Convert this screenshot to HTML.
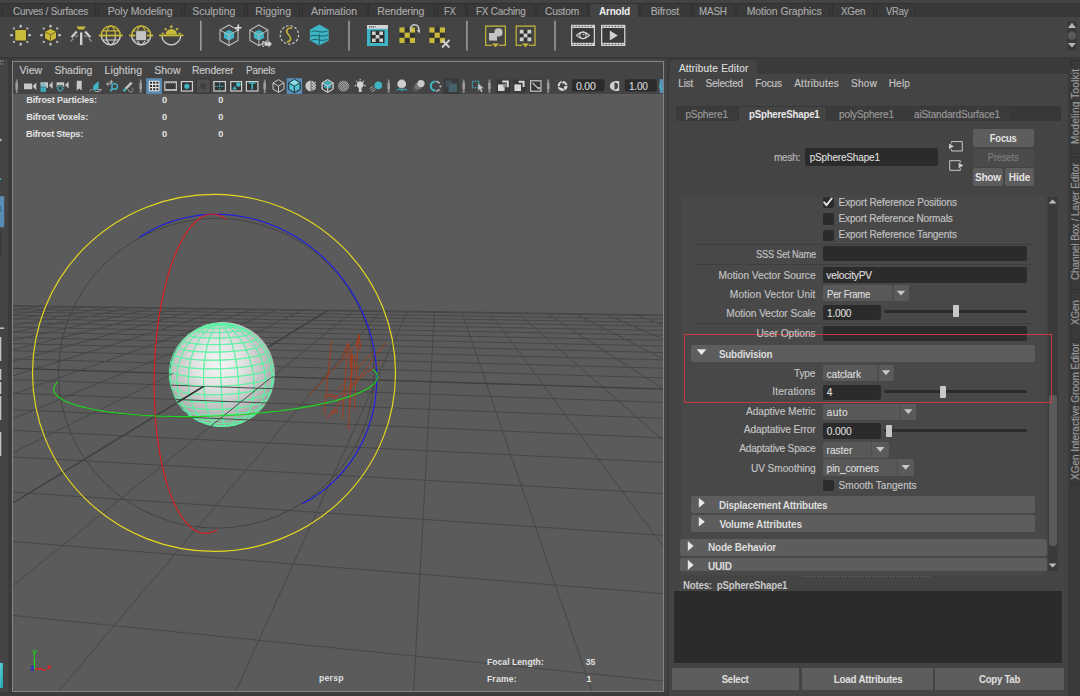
<!DOCTYPE html>
<html><head><meta charset="utf-8"><style>
html,body{margin:0;padding:0;width:1080px;height:696px;overflow:hidden;background:#444;}
body{position:relative;font-family:"Liberation Sans",sans-serif;}
div{position:absolute;}
.t{white-space:pre;-webkit-text-stroke:0.15px currentColor;}
svg{position:absolute;left:0;top:0;}
</style></head><body>
<div style="left:0px;top:0px;width:1080px;height:3px;background:#434343;"></div><div style="left:0px;top:3px;width:1080px;height:14px;background:#383838;"></div><div style="left:0px;top:17px;width:1080px;height:40px;background:#444444;"></div><div style="left:0px;top:57px;width:1080px;height:2px;background:#393939;"></div><div style="left:2px;top:3px;width:94px;height:14px;background:#393939;border:1px solid #303030;border-bottom:none;box-sizing:border-box;border-radius:2px 2px 0 0"></div><div style="left:98px;top:3px;width:84px;height:14px;background:#393939;border:1px solid #303030;border-bottom:none;box-sizing:border-box;border-radius:2px 2px 0 0"></div><div style="left:184px;top:3px;width:61px;height:14px;background:#393939;border:1px solid #303030;border-bottom:none;box-sizing:border-box;border-radius:2px 2px 0 0"></div><div style="left:247px;top:3px;width:53px;height:14px;background:#393939;border:1px solid #303030;border-bottom:none;box-sizing:border-box;border-radius:2px 2px 0 0"></div><div style="left:302px;top:3px;width:65px;height:14px;background:#393939;border:1px solid #303030;border-bottom:none;box-sizing:border-box;border-radius:2px 2px 0 0"></div><div style="left:368px;top:3px;width:67px;height:14px;background:#393939;border:1px solid #303030;border-bottom:none;box-sizing:border-box;border-radius:2px 2px 0 0"></div><div style="left:437px;top:3px;width:29px;height:14px;background:#393939;border:1px solid #303030;border-bottom:none;box-sizing:border-box;border-radius:2px 2px 0 0"></div><div style="left:467px;top:3px;width:68px;height:14px;background:#393939;border:1px solid #303030;border-bottom:none;box-sizing:border-box;border-radius:2px 2px 0 0"></div><div style="left:537px;top:3px;width:51px;height:14px;background:#393939;border:1px solid #303030;border-bottom:none;box-sizing:border-box;border-radius:2px 2px 0 0"></div><div style="left:589px;top:3px;width:50px;height:14px;background:#444444;border:1px solid #303030;border-bottom:none;box-sizing:border-box;border-radius:2px 2px 0 0"></div><div style="left:641px;top:3px;width:50px;height:14px;background:#393939;border:1px solid #303030;border-bottom:none;box-sizing:border-box;border-radius:2px 2px 0 0"></div><div style="left:692px;top:3px;width:43px;height:14px;background:#393939;border:1px solid #303030;border-bottom:none;box-sizing:border-box;border-radius:2px 2px 0 0"></div><div style="left:737px;top:3px;width:93px;height:14px;background:#393939;border:1px solid #303030;border-bottom:none;box-sizing:border-box;border-radius:2px 2px 0 0"></div><div style="left:832px;top:3px;width:42px;height:14px;background:#393939;border:1px solid #303030;border-bottom:none;box-sizing:border-box;border-radius:2px 2px 0 0"></div><div style="left:876px;top:3px;width:39px;height:14px;background:#393939;border:1px solid #303030;border-bottom:none;box-sizing:border-box;border-radius:2px 2px 0 0"></div><div style="left:0px;top:59px;width:8px;height:637px;background:#444444;"></div><div style="left:8px;top:59px;width:4px;height:637px;background:#3b3b3b;"></div><div style="left:12px;top:61px;width:652px;height:631px;background:#858585;"></div><div style="left:13px;top:62px;width:650px;height:32px;background:#444444;"></div><div style="left:13px;top:94px;width:650px;height:597px;background:#5b5b5b;"></div><div style="left:664px;top:59px;width:5px;height:637px;background:#434343;"></div><div style="left:667px;top:59px;width:2px;height:637px;background:#3a3a3a;"></div><div style="left:0px;top:692px;width:669px;height:4px;background:#3b3b3b;"></div><div style="left:669px;top:59px;width:411px;height:637px;background:#444444;"></div><div style="left:669px;top:59px;width:399px;height:15px;background:#3b3b3b;"></div><div style="left:670px;top:60px;width:87px;height:14px;background:#444444;border-radius:3px 3px 0 0"></div><div style="left:1068px;top:59px;width:12px;height:637px;background:#3a3a3a;"></div><div style="left:675.6px;top:105.6px;width:385px;height:15.5px;background:#383838;"></div><div style="left:676px;top:107px;width:61px;height:14px;background:#3b3b3b;border-radius:2px 2px 0 0"></div><div style="left:739px;top:107px;width:87px;height:14px;background:#444444;border-radius:2px 2px 0 0"></div><div style="left:828px;top:107px;width:76px;height:14px;background:#3b3b3b;border-radius:2px 2px 0 0"></div><div style="left:905px;top:107px;width:105px;height:14px;background:#3b3b3b;border-radius:2px 2px 0 0"></div><div style="left:805px;top:147.5px;width:133px;height:18.5px;background:#2b2b2b;border-radius:2px"></div><div style="left:973px;top:129px;width:61px;height:18px;background:#5d5d5d;border-radius:2px"></div><div style="left:973px;top:148.5px;width:61px;height:18px;background:#4b4b4b;border-radius:2px"></div><div style="left:973px;top:168px;width:30px;height:17.5px;background:#5d5d5d;border-radius:2px"></div><div style="left:1005px;top:168px;width:29px;height:17.5px;background:#5d5d5d;border-radius:2px"></div><div style="left:681px;top:196px;width:364px;height:379px;background:#484848;"></div><div style="left:1048px;top:196.5px;width:10px;height:374.5px;background:#3a3a3a;"></div><div style="left:1049px;top:394.7px;width:8px;height:151px;background:#5a5a5a;border-radius:3px"></div><div style="left:822.5px;top:196.5px;width:11.5px;height:11.5px;background:#2b2b2b;border-radius:2px"></div><div style="left:822.5px;top:213px;width:11.5px;height:11.5px;background:#2b2b2b;border-radius:2px"></div><div style="left:822.5px;top:229.5px;width:11.5px;height:11.5px;background:#2b2b2b;border-radius:2px"></div><div style="left:694px;top:243.5px;width:338px;height:1px;background:#3f3f3f;"></div><div style="left:694px;top:264px;width:338px;height:1px;background:#3f3f3f;"></div><div style="left:694px;top:322.5px;width:338px;height:1px;background:#3f3f3f;"></div><div style="left:822.5px;top:246.4px;width:204.0px;height:15.099999999999994px;background:#2b2b2b;border-radius:2px"></div><div style="left:822.5px;top:267.4px;width:204.0px;height:15.200000000000045px;background:#2b2b2b;border-radius:2px"></div><div style="left:823px;top:285.1px;width:69px;height:16.19999999999999px;background:#585858;border-radius:2px 0 0 2px"></div><div style="left:892px;top:285.1px;width:1.5px;height:16.19999999999999px;background:#4e4e4e;"></div><div style="left:893.5px;top:285.1px;width:15.5px;height:16.19999999999999px;background:#5a5a5a;border-radius:0 2px 2px 0"></div><div style="left:823px;top:305px;width:57.700000000000045px;height:15px;background:#2b2b2b;border-radius:2px"></div><div style="left:884px;top:309.9px;width:143px;height:3px;background:#2b2b2b;border-radius:1.5px"></div><div style="left:952.8px;top:305.4px;width:6.5px;height:12px;background:#c8c8c8;border-radius:1px"></div><div style="left:822.5px;top:325.7px;width:204.0px;height:15.199999999999989px;background:#2b2b2b;border-radius:2px"></div><div style="left:691px;top:345.4px;width:344px;height:16.5px;background:#5d5d5d;border-radius:2px"></div><div style="left:823px;top:364.8px;width:54px;height:15.899999999999977px;background:#585858;border-radius:2px 0 0 2px"></div><div style="left:877px;top:364.8px;width:1.5px;height:15.899999999999977px;background:#4e4e4e;"></div><div style="left:878.5px;top:364.8px;width:15.5px;height:15.899999999999977px;background:#5a5a5a;border-radius:0 2px 2px 0"></div><div style="left:823px;top:384.5px;width:57.700000000000045px;height:15.199999999999989px;background:#2b2b2b;border-radius:2px"></div><div style="left:884px;top:390.0px;width:143px;height:3px;background:#2b2b2b;border-radius:1.5px"></div><div style="left:939.6px;top:385.5px;width:6.5px;height:12px;background:#c8c8c8;border-radius:1px"></div><div style="left:823px;top:403.5px;width:76.70000000000005px;height:16.19999999999999px;background:#585858;border-radius:2px 0 0 2px"></div><div style="left:899.7px;top:403.5px;width:1.5px;height:16.19999999999999px;background:#4e4e4e;"></div><div style="left:901.2px;top:403.5px;width:14.799999999999955px;height:16.19999999999999px;background:#5a5a5a;border-radius:0 2px 2px 0"></div><div style="left:823px;top:422.5px;width:57.700000000000045px;height:16.0px;background:#2b2b2b;border-radius:2px"></div><div style="left:884px;top:429.0px;width:143px;height:3px;background:#2b2b2b;border-radius:1.5px"></div><div style="left:885.6px;top:424.5px;width:6.5px;height:12px;background:#c8c8c8;border-radius:1px"></div><div style="left:823px;top:441.5px;width:47.5px;height:16.0px;background:#585858;border-radius:2px 0 0 2px"></div><div style="left:870.5px;top:441.5px;width:1.5px;height:16.0px;background:#4e4e4e;"></div><div style="left:872.0px;top:441.5px;width:17.0px;height:16.0px;background:#5a5a5a;border-radius:0 2px 2px 0"></div><div style="left:823px;top:458.8px;width:73.60000000000002px;height:17.099999999999966px;background:#585858;border-radius:2px 0 0 2px"></div><div style="left:896.6px;top:458.8px;width:1.5px;height:17.099999999999966px;background:#4e4e4e;"></div><div style="left:898.1px;top:458.8px;width:15.600000000000023px;height:17.099999999999966px;background:#5a5a5a;border-radius:0 2px 2px 0"></div><div style="left:822.5px;top:479.7px;width:11.5px;height:11.5px;background:#2b2b2b;border-radius:2px"></div><div style="left:691px;top:495.6px;width:344px;height:17px;background:#5d5d5d;border-radius:2px"></div><div style="left:691px;top:514.6px;width:344px;height:17px;background:#5d5d5d;border-radius:2px"></div><div style="left:679.5px;top:538.5px;width:367px;height:17px;background:#5d5d5d;border-radius:2px"></div><div style="left:679.5px;top:557.5px;width:367px;height:13.5px;background:#5d5d5d;border-radius:2px 2px 0 0"></div><div style="left:674.4px;top:590.9px;width:387.4px;height:72.6px;background:#2b2b2b;"></div><div style="left:671.7px;top:667.5px;width:127.5px;height:22.2px;background:#5d5d5d;"></div><div style="left:802px;top:667.5px;width:131.39999999999998px;height:22.2px;background:#5d5d5d;"></div><div style="left:935.4px;top:667.5px;width:129.10000000000002px;height:22.2px;background:#5d5d5d;"></div><div style="left:684.4px;top:334px;width:368px;height:68.5px;background:transparent;border:1px solid #c8383c;box-sizing:border-box"></div><div style="left:1070.5px;top:60.2px;width:9.5px;height:93.8px;background:#3a3a3a;border:1px solid #323232;border-right:none;box-sizing:border-box;border-radius:2px 0 0 2px"></div><div style="left:1070.5px;top:156.7px;width:9.5px;height:133.3px;background:#3a3a3a;border:1px solid #323232;border-right:none;box-sizing:border-box;border-radius:2px 0 0 2px"></div><div style="left:1070.5px;top:292px;width:9.5px;height:47.60000000000002px;background:#3a3a3a;border:1px solid #323232;border-right:none;box-sizing:border-box;border-radius:2px 0 0 2px"></div><div style="left:1070.5px;top:341.3px;width:9.5px;height:144.2px;background:#3a3a3a;border:1px solid #323232;border-right:none;box-sizing:border-box;border-radius:2px 0 0 2px"></div>
<svg width="650" height="597" viewBox="0 0 650 597" style="left:13px;top:94px;"><path d="M-57.8,210.7L-3994.2,713.8M-36.6,211.0L-3914.1,732.0M-15.1,211.3L-3934.1,766.3M6.7,211.7L-3956.6,804.9M28.7,212.0L-3982.1,848.9M50.9,212.3L-4011.4,899.3M73.5,212.6L-3904.1,932.1M96.3,213.0L-3930.8,996.0M119.4,213.3L-3962.3,1071.4M142.9,213.6L-4000.0,1161.7M166.6,214.0L-3851.5,1223.1M190.6,214.3L-3883.2,1348.2M214.9,214.7L-3923.4,1506.7M239.6,215.0L-3712.8,1620.3M264.5,215.4L-3224.6,1656.5M289.8,215.7L-2524.8,1603.0M341.4,216.5L-1470.6,1675.7M367.7,216.9L-821.3,1620.7M394.4,217.2L-255.4,1657.1M421.4,217.6L345.6,1603.4M448.8,218.0L935.8,1639.0M476.6,218.4L1490.2,1586.3M504.8,218.8L2103.7,1621.2M533.4,219.2L2749.1,1657.8M562.3,219.7L3249.0,1603.7M591.7,220.1L3917.4,1639.6M621.5,220.5L3953.5,1434.1M651.7,220.9L3980.9,1278.1M682.4,221.4L3859.4,1115.4M713.5,221.8L3889.5,1024.0M745.1,222.3L3914.5,948.3M777.1,222.7L3935.5,884.5M-57.8,210.7L777.1,222.7M-63.1,211.4L781.9,223.7M-81.6,213.8L798.8,227.3M-101.6,216.3L817.4,231.2M-123.2,219.1L838.0,235.5M-146.7,222.1L860.9,240.3M-172.3,225.4L886.4,245.7M-200.3,228.9L915.2,251.7M-231.0,232.9L947.7,258.5M-264.9,237.2L984.9,266.3M-302.5,242.0L1027.7,275.3M-344.4,247.4L1077.7,285.7M-391.5,253.4L1136.7,298.1M-505.3,267.9L1293.8,331.0M-575.0,276.8L1401.6,353.6M-655.9,287.2L1540.0,382.6M-751.2,299.4L1724.1,421.2M-864.8,313.9L1980.9,475.0M-1002.7,331.5L2364.4,555.3M-1173.6,353.3L2998.7,688.2M-1391.0,381.1L3957.9,920.9M-1676.9,417.7L3976.4,1182.2M-2069.5,467.8L3739.9,1650.3M-2642.5,541.1L130.9,1666.3M-3557.2,658.0L-3506.9,1682.3" stroke="#474747" stroke-width="1" fill="none"/><path d="M315.4,216.1L-2011.1,1638.4M-444.7,260.2L1207.5,312.9" stroke="#3e3e3e" stroke-width="1.35" fill="none"/><defs><radialGradient id="sg" cx="0.46" cy="0.40" r="0.66"><stop offset="0" stop-color="#f4f4f4"/><stop offset="0.35" stop-color="#e2e2e2"/><stop offset="0.7" stop-color="#bcbcbc"/><stop offset="1" stop-color="#8e8e8e"/></radialGradient><clipPath id="below"><path d="M259.2,282.7L259.0,282.8L258.7,283.0L258.5,283.2L258.2,283.4L257.9,283.6L257.6,283.8L257.2,284.0L256.9,284.1L256.5,284.3L256.1,284.5L255.7,284.7L255.3,284.9L254.9,285.1L254.4,285.2L254.0,285.4L253.5,285.6L253.0,285.8L252.5,285.9L252.0,286.1L251.4,286.3L250.9,286.5L250.3,286.6L249.7,286.8L249.1,287.0L248.5,287.2L247.9,287.3L247.3,287.5L246.6,287.6L246.0,287.8L245.3,288.0L244.6,288.1L243.9,288.3L243.2,288.4L242.5,288.6L241.7,288.7L241.0,288.9L240.2,289.0L239.4,289.2L238.6,289.3L237.8,289.5L237.0,289.6L236.2,289.7L235.4,289.9L234.5,290.0L233.7,290.1L232.8,290.2L232.0,290.4L231.1,290.5L230.2,290.6L229.3,290.7L228.4,290.8L227.5,290.9L226.6,291.0L225.6,291.1L224.7,291.2L223.8,291.3L222.8,291.4L221.9,291.5L220.9,291.6L220.0,291.6L219.0,291.7L218.0,291.8L217.1,291.9L216.1,291.9L215.1,292.0L214.1,292.0L213.1,292.1L212.2,292.1L211.2,292.2L210.2,292.2L209.2,292.3L208.2,292.3L207.2,292.4L206.2,292.4L205.2,292.4L204.3,292.4L203.3,292.4L202.3,292.5L201.3,292.5L200.3,292.5L199.3,292.5L198.4,292.5L197.4,292.5L196.4,292.5L195.5,292.5L194.5,292.4L193.6,292.4L192.6,292.4L191.7,292.4L190.7,292.3L189.8,292.3L188.9,292.3L188.0,292.2L187.1,292.2L186.2,292.1L185.3,292.1L184.4,292.0L183.5,292.0L182.7,291.9L181.8,291.8L181.0,291.8L180.1,291.7L179.3,291.6L178.5,291.5L177.7,291.4L176.9,291.4L176.1,291.3L175.4,291.2L174.6,291.1L173.9,291.0L173.1,290.9L172.4,290.8L171.7,290.7L171.0,290.5L170.4,290.4L169.7,290.3L169.0,290.2L168.4,290.1L167.8,289.9L167.2,289.8L166.6,289.7L166.0,289.5L165.5,289.4L164.9,289.3L164.4,289.1L163.9,289.0L163.4,288.8L162.9,288.7L162.4,288.5L162.0,288.4L161.5,288.2L161.1,288.1L160.7,287.9L160.3,287.8L160.0,287.6L159.6,287.4L159.3,287.3L159.0,287.1L158.7,286.9L158.4,286.8L158.1,286.6L157.8,286.4L157.6,286.2L157.4,286.1L157.2,285.9L157.0,285.7L156.8,285.5L156.7,285.4L156.6,285.2L156.4,285.0L156.3,284.8L156.3,284.6L156.2,284.5L156.1,284.3L156.1,284.1L156.1,283.9L156.1,283.7L156.1,283.5L156.1,283.3L156.2,283.2L156.3,283.0L156.3,282.8L156.4,282.6L156.6,282.4L156.7,282.2L156.8,282.0L157.0,281.9L157.2,281.7L157.4,281.5L157.6,281.3L157.8,281.1L158.0,280.9L158.3,280.8L158.5,280.6L158.8,280.4L159.1,280.2L159.4,280.0L159.8,279.9L160.1,279.7L160.4,279.5L129.6,282.3L129.6,360.3L289.6,360.3L289.6,282.3Z"/></clipPath><clipPath id="disc"><circle cx="209.6" cy="280.3" r="53.0"/></clipPath></defs><circle cx="209.6" cy="280.3" r="52.4" fill="url(#sg)"/><path d="M239.9,322.5L235.8,324.9L240.7,320.6L245.6,317.7ZM245.6,317.7L240.7,320.6L245.0,315.2L250.5,312.0ZM250.5,312.0L245.0,315.2L248.4,308.8L254.4,305.4ZM254.4,305.4L248.4,308.8L250.8,301.7L257.2,298.3ZM257.2,298.3L250.8,301.7L252.2,294.0L258.8,290.6ZM258.8,290.6L252.2,294.0L252.5,285.9L259.2,282.7ZM259.2,282.7L252.5,285.9L251.7,277.7L258.4,274.6ZM258.4,274.6L251.7,277.7L249.8,269.5L256.3,266.7ZM256.3,266.7L249.8,269.5L246.9,261.5L253.0,259.1ZM253.0,259.1L246.9,261.5L243.0,254.1L248.6,252.0ZM248.6,252.0L243.0,254.1L238.2,247.4L243.2,245.7ZM243.2,245.7L238.2,247.4L232.7,241.6L237.0,240.2ZM237.0,240.2L232.7,241.6L226.6,236.8L230.0,235.8ZM230.0,235.8L226.6,236.8L220.2,233.1L222.5,232.5ZM222.5,232.5L220.2,233.1L213.5,230.7L214.7,230.4ZM214.7,230.4L213.5,230.7L206.8,229.6L206.8,229.6ZM224.2,330.2L220.7,331.3L225.0,329.8L230.2,328.1ZM230.2,328.1L225.0,329.8L229.0,327.0L235.8,324.9ZM235.8,324.9L229.0,327.0L232.6,323.1L240.7,320.6ZM240.7,320.6L232.6,323.1L235.7,318.0L245.0,315.2ZM245.0,315.2L235.7,318.0L238.2,311.8L248.4,308.8ZM248.4,308.8L238.2,311.8L239.9,304.8L250.8,301.7ZM250.8,301.7L239.9,304.8L240.8,297.1L252.2,294.0ZM252.2,294.0L240.8,297.1L241.0,288.9L252.5,285.9ZM252.5,285.9L241.0,288.9L240.3,280.4L251.7,277.7ZM251.7,277.7L240.3,280.4L238.7,271.9L249.8,269.5ZM249.8,269.5L238.7,271.9L236.4,263.7L246.9,261.5ZM246.9,261.5L236.4,263.7L233.5,255.9L243.0,254.1ZM243.0,254.1L233.5,255.9L229.8,248.9L238.2,247.4ZM238.2,247.4L229.8,248.9L225.7,242.7L232.7,241.6ZM232.7,241.6L225.7,242.7L221.2,237.6L226.6,236.8ZM226.6,236.8L221.2,237.6L216.5,233.7L220.2,233.1ZM220.2,233.1L216.5,233.7L211.7,231.0L213.5,230.7ZM213.5,230.7L211.7,231.0L206.8,229.6L206.8,229.6ZM220.7,331.3L216.1,332.1L218.3,331.0L225.0,329.8ZM225.0,329.8L218.3,331.0L220.3,328.6L229.0,327.0ZM229.0,327.0L220.3,328.6L222.1,325.0L232.6,323.1ZM232.6,323.1L222.1,325.0L223.6,320.1L235.7,318.0ZM235.7,318.0L223.6,320.1L224.7,314.1L238.2,311.8ZM238.2,311.8L224.7,314.1L225.4,307.1L239.9,304.8ZM239.9,304.8L225.4,307.1L225.8,299.4L240.8,297.1ZM240.8,297.1L225.8,299.4L225.6,291.1L241.0,288.9ZM241.0,288.9L225.6,291.1L225.1,282.5L240.3,280.4ZM240.3,280.4L225.1,282.5L224.1,273.8L238.7,271.9ZM238.7,271.9L224.1,273.8L222.7,265.3L236.4,263.7ZM236.4,263.7L222.7,265.3L221.0,257.3L233.5,255.9ZM233.5,255.9L221.0,257.3L219.0,250.0L229.8,248.9ZM229.8,248.9L219.0,250.0L216.7,243.6L225.7,242.7ZM225.7,242.7L216.7,243.6L214.3,238.2L221.2,237.6ZM221.2,237.6L214.3,238.2L211.8,234.1L216.5,233.7ZM216.5,233.7L211.8,234.1L209.3,231.2L211.7,231.0ZM211.7,231.0L209.3,231.2L206.8,229.6L206.8,229.6ZM216.1,332.1L211.1,332.6L210.9,331.7L218.3,331.0ZM218.3,331.0L210.9,331.7L210.6,329.5L220.3,328.6ZM220.3,328.6L210.6,329.5L210.2,326.0L222.1,325.0ZM222.1,325.0L210.2,326.0L209.9,321.2L223.6,320.1ZM223.6,320.1L209.9,321.2L209.5,315.3L224.7,314.1ZM224.7,314.1L209.5,315.3L209.0,308.4L225.4,307.1ZM225.4,307.1L209.0,308.4L208.6,300.7L225.8,299.4ZM225.8,299.4L208.6,300.7L208.2,292.3L225.6,291.1ZM225.6,291.1L208.2,292.3L207.8,283.6L225.1,282.5ZM225.1,282.5L207.8,283.6L207.5,274.8L224.1,273.8ZM224.1,273.8L207.5,274.8L207.2,266.2L222.7,265.3ZM222.7,265.3L207.2,266.2L206.9,258.1L221.0,257.3ZM221.0,257.3L206.9,258.1L206.7,250.6L219.0,250.0ZM219.0,250.0L206.7,250.6L206.6,244.1L216.7,243.6ZM216.7,243.6L206.6,244.1L206.6,238.6L214.3,238.2ZM214.3,238.2L206.6,238.6L206.6,234.3L211.8,234.1ZM211.8,234.1L206.6,234.3L206.7,231.3L209.3,231.2ZM209.3,231.2L206.7,231.3L206.8,229.6L206.8,229.6ZM211.1,332.6L206.1,332.6L203.4,331.7L210.9,331.7ZM210.9,331.7L203.4,331.7L200.8,329.5L210.6,329.5ZM210.6,329.5L200.8,329.5L198.4,326.0L210.2,326.0ZM210.2,326.0L198.4,326.0L196.1,321.2L209.9,321.2ZM209.9,321.2L196.1,321.2L194.2,315.3L209.5,315.3ZM209.5,315.3L194.2,315.3L192.6,308.4L209.0,308.4ZM209.0,308.4L192.6,308.4L191.4,300.7L208.6,300.7ZM208.6,300.7L191.4,300.7L190.7,292.3L208.2,292.3ZM208.2,292.3L190.7,292.3L190.5,283.6L207.8,283.6ZM207.8,283.6L190.5,283.6L190.8,274.9L207.5,274.8ZM207.5,274.8L190.8,274.9L191.6,266.2L207.2,266.2ZM207.2,266.2L191.6,266.2L192.9,258.1L206.9,258.1ZM206.9,258.1L192.9,258.1L194.5,250.6L206.7,250.6ZM206.7,250.6L194.5,250.6L196.5,244.1L206.6,244.1ZM206.6,244.1L196.5,244.1L198.9,238.6L206.6,238.6ZM206.6,238.6L198.9,238.6L201.4,234.3L206.6,234.3ZM206.6,234.3L201.4,234.3L204.1,231.3L206.7,231.3ZM206.7,231.3L204.1,231.3L206.8,229.6L206.8,229.6ZM206.1,332.6L201.7,332.1L196.8,331.0L203.4,331.7ZM203.4,331.7L196.8,331.0L192.1,328.6L200.8,329.5ZM200.8,329.5L192.1,328.6L187.8,325.0L198.4,326.0ZM198.4,326.0L187.8,325.0L184.0,320.1L196.1,321.2ZM196.1,321.2L184.0,320.1L180.7,314.1L194.2,315.3ZM194.2,315.3L180.7,314.1L178.1,307.2L192.6,308.4ZM192.6,308.4L178.1,307.2L176.3,299.5L191.4,300.7ZM191.4,300.7L176.3,299.5L175.4,291.2L190.7,292.3ZM190.7,292.3L175.4,291.2L175.3,282.6L190.5,283.6ZM190.5,283.6L175.3,282.6L176.2,273.9L190.8,274.9ZM190.8,274.9L176.2,273.9L177.9,265.4L191.6,266.2ZM191.6,266.2L177.9,265.4L180.4,257.4L192.9,258.1ZM192.9,258.1L180.4,257.4L183.7,250.1L194.5,250.6ZM194.5,250.6L183.7,250.1L187.6,243.6L196.5,244.1ZM196.5,244.1L187.6,243.6L192.0,238.3L198.9,238.6ZM198.9,238.6L192.0,238.3L196.8,234.1L201.4,234.3ZM201.4,234.3L196.8,234.1L201.8,231.2L204.1,231.3ZM204.1,231.3L201.8,231.2L206.8,229.6L206.8,229.6ZM196.8,331.0L191.7,329.8L185.5,327.1L192.1,328.6ZM192.1,328.6L185.5,327.1L179.8,323.1L187.8,325.0ZM187.8,325.0L179.8,323.1L174.8,318.0L184.0,320.1ZM184.0,320.1L174.8,318.0L170.5,311.9L180.7,314.1ZM180.7,314.1L170.5,311.9L167.2,304.9L178.1,307.2ZM178.1,307.2L167.2,304.9L165.0,297.2L176.3,299.5ZM176.3,299.5L165.0,297.2L163.9,289.0L175.4,291.2ZM175.4,291.2L163.9,289.0L163.9,280.5L175.3,282.6ZM175.3,282.6L163.9,280.5L165.2,272.0L176.2,273.9ZM176.2,273.9L165.2,272.0L167.6,263.8L177.9,265.4ZM177.9,265.4L167.6,263.8L171.1,256.0L180.4,257.4ZM180.4,257.4L171.1,256.0L175.5,249.0L183.7,250.1ZM183.7,250.1L175.5,249.0L180.8,242.8L187.6,243.6ZM187.6,243.6L180.8,242.8L186.8,237.7L192.0,238.3ZM192.0,238.3L186.8,237.7L193.2,233.7L196.8,234.1ZM196.8,234.1L193.2,233.7L200.0,231.0L201.8,231.2ZM201.8,231.2L200.0,231.0L206.8,229.6L206.8,229.6ZM185.5,327.1L181.6,325.0L175.1,320.6L179.8,323.1ZM179.8,323.1L175.1,320.6L169.4,315.2L174.8,318.0ZM174.8,318.0L169.4,315.2L164.7,308.9L170.5,311.9ZM170.5,311.9L164.7,308.9L161.1,301.8L167.2,304.9ZM167.2,304.9L161.1,301.8L158.6,294.1L165.0,297.2ZM165.0,297.2L158.6,294.1L157.4,286.1L163.9,289.0ZM163.9,289.0L157.4,286.1L157.5,277.8L163.9,280.5ZM163.9,280.5L157.5,277.8L159.0,269.6L165.2,272.0ZM165.2,272.0L159.0,269.6L161.7,261.7L167.6,263.8ZM167.6,263.8L161.7,261.7L165.7,254.2L171.1,256.0ZM171.1,256.0L165.7,254.2L170.7,247.5L175.5,249.0ZM175.5,249.0L170.7,247.5L176.8,241.7L180.8,242.8ZM180.8,242.8L176.8,241.7L183.6,236.8L186.8,237.7ZM186.8,237.7L183.6,236.8L191.0,233.2L193.2,233.7ZM193.2,233.7L191.0,233.2L198.8,230.8L200.0,231.0ZM200.0,231.0L198.8,230.8L206.8,229.6L206.8,229.6ZM158.6,294.1L157.5,290.7L156.3,282.8L157.4,286.1ZM157.4,286.1L156.3,282.8L156.5,274.8L157.5,277.8ZM157.5,277.8L156.5,274.8L157.9,266.9L159.0,269.6ZM159.0,269.6L157.9,266.9L160.7,259.3L161.7,261.7ZM161.7,261.7L160.7,259.3L164.7,252.2L165.7,254.2ZM165.7,254.2L164.7,252.2L169.8,245.8L170.7,247.5ZM170.7,247.5L169.8,245.8L175.9,240.3L176.8,241.7ZM176.8,241.7L175.9,240.3L182.8,235.9L183.6,236.8ZM183.6,236.8L182.8,235.9L190.4,232.6L191.0,233.2ZM191.0,233.2L190.4,232.6L198.5,230.5L198.8,230.8ZM198.8,230.8L198.5,230.5L206.8,229.6L206.8,229.6ZM182.8,235.9L184.4,234.9L191.5,231.9L190.4,232.6ZM190.4,232.6L191.5,231.9L199.0,230.1L198.5,230.5ZM198.5,230.5L199.0,230.1L206.8,229.6L206.8,229.6ZM191.5,231.9L194.0,231.3L200.3,229.8L199.0,230.1ZM199.0,230.1L200.3,229.8L206.8,229.6L206.8,229.6ZM200.3,229.8L202.1,229.6L206.8,229.6L206.8,229.6ZM202.1,229.6L204.5,229.4L206.8,229.6L206.8,229.6ZM204.5,229.4L207.0,229.3L206.8,229.6L206.8,229.6ZM207.0,229.3L209.6,229.3L206.8,229.6L206.8,229.6ZM209.6,229.3L211.8,229.4L206.8,229.6L206.8,229.6ZM211.8,229.4L213.6,229.5L206.8,229.6L206.8,229.6ZM220.2,230.7L222.5,231.2L214.8,229.8L213.6,229.5ZM213.6,229.5L214.8,229.8L206.8,229.6L206.8,229.6ZM236.5,237.6L238.3,238.9L231.1,234.8L229.8,233.9ZM229.8,233.9L231.1,234.8L223.3,231.8L222.5,231.2ZM222.5,231.2L223.3,231.8L215.2,230.1L214.8,229.8ZM214.8,229.8L215.2,230.1L206.8,229.6L206.8,229.6ZM255.9,302.0L254.4,305.4L257.2,298.3L258.7,294.8ZM258.7,294.8L257.2,298.3L258.8,290.6L260.4,287.2ZM260.4,287.2L258.8,290.6L259.2,282.7L260.8,279.4ZM260.8,279.4L259.2,282.7L258.4,274.6L260.0,271.6ZM260.0,271.6L258.4,274.6L256.3,266.7L257.9,263.9ZM257.9,263.9L256.3,266.7L253.0,259.1L254.6,256.7ZM254.6,256.7L253.0,259.1L248.6,252.0L250.1,250.0ZM250.1,250.0L248.6,252.0L243.2,245.7L244.7,244.0ZM244.7,244.0L243.2,245.7L237.0,240.2L238.3,238.9ZM238.3,238.9L237.0,240.2L230.0,235.8L231.1,234.8ZM231.1,234.8L230.0,235.8L222.5,232.5L223.3,231.8ZM223.3,231.8L222.5,232.5L214.7,230.4L215.2,230.1ZM215.2,230.1L214.7,230.4L206.8,229.6L206.8,229.6Z" stroke="#5cf2a4" stroke-width="0.85" fill="none" stroke-linejoin="round"/><rect x="204.4" y="272.4" width="2" height="1.4" fill="#ffffff"/><g clip-path="url(#disc)"><g clip-path="url(#below)"><path d="M-57.8,210.7L-3994.2,713.8M-36.6,211.0L-3914.1,732.0M-15.1,211.3L-3934.1,766.3M6.7,211.7L-3956.6,804.9M28.7,212.0L-3982.1,848.9M50.9,212.3L-4011.4,899.3M73.5,212.6L-3904.1,932.1M96.3,213.0L-3930.8,996.0M119.4,213.3L-3962.3,1071.4M142.9,213.6L-4000.0,1161.7M166.6,214.0L-3851.5,1223.1M190.6,214.3L-3883.2,1348.2M214.9,214.7L-3923.4,1506.7M239.6,215.0L-3712.8,1620.3M264.5,215.4L-3224.6,1656.5M289.8,215.7L-2524.8,1603.0M341.4,216.5L-1470.6,1675.7M367.7,216.9L-821.3,1620.7M394.4,217.2L-255.4,1657.1M421.4,217.6L345.6,1603.4M448.8,218.0L935.8,1639.0M476.6,218.4L1490.2,1586.3M504.8,218.8L2103.7,1621.2M533.4,219.2L2749.1,1657.8M562.3,219.7L3249.0,1603.7M591.7,220.1L3917.4,1639.6M621.5,220.5L3953.5,1434.1M651.7,220.9L3980.9,1278.1M682.4,221.4L3859.4,1115.4M713.5,221.8L3889.5,1024.0M745.1,222.3L3914.5,948.3M777.1,222.7L3935.5,884.5M-57.8,210.7L777.1,222.7M-63.1,211.4L781.9,223.7M-81.6,213.8L798.8,227.3M-101.6,216.3L817.4,231.2M-123.2,219.1L838.0,235.5M-146.7,222.1L860.9,240.3M-172.3,225.4L886.4,245.7M-200.3,228.9L915.2,251.7M-231.0,232.9L947.7,258.5M-264.9,237.2L984.9,266.3M-302.5,242.0L1027.7,275.3M-344.4,247.4L1077.7,285.7M-391.5,253.4L1136.7,298.1M-505.3,267.9L1293.8,331.0M-575.0,276.8L1401.6,353.6M-655.9,287.2L1540.0,382.6M-751.2,299.4L1724.1,421.2M-864.8,313.9L1980.9,475.0M-1002.7,331.5L2364.4,555.3M-1173.6,353.3L2998.7,688.2M-1391.0,381.1L3957.9,920.9M-1676.9,417.7L3976.4,1182.2M-2069.5,467.8L3739.9,1650.3M-2642.5,541.1L130.9,1666.3M-3557.2,658.0L-3506.9,1682.3" stroke="#4a4a4a" stroke-width="1" fill="none"/><path d="M315.4,216.1L-2011.1,1638.4M-444.7,260.2L1207.5,312.9" stroke="#303030" stroke-width="1.6" fill="none"/></g></g><path d="M318.4,246.5L311.1,320.7M334.9,249.1L329.2,325.0M339.6,261.2L335.3,336.2M345.6,240.5L341.3,315.5M338.7,262.0L337.0,312.0M295.6,301.7L346.5,247.4M313.7,325.0L373.2,248.2M320.6,305.1L367.2,268.1M324.1,296.5L361.1,256.9M329.2,263.8L334.9,249.1L338.7,262.9M343.0,251.7L346.0,240.5L347.7,254.3L343.0,251.7M312.9,301.7L319.8,300.0L324.1,303.4L312.9,301.7M317.2,320.7L323.2,315.5L324.9,317.2L317.2,320.7M337.0,261.2L341.3,262.0L341.8,274.1L337.3,274.1L337.0,261.2" stroke="#a83a1a" stroke-width="0.95" fill="none"/><ellipse cx="203.3" cy="279.25" rx="157.8" ry="154.9" stroke="#444444" stroke-width="1" fill="none"/><path d="M289.3,409.8L291.5,408.6L293.6,407.4L295.8,406.2L297.9,405.0L300.0,403.7L302.0,402.3L304.1,400.9L306.1,399.5L308.1,398.1L310.1,396.6L312.0,395.1L313.9,393.5L315.8,391.9L317.7,390.2L319.5,388.6L321.3,386.8L323.1,385.1L324.9,383.3L326.6,381.5L328.3,379.6L329.9,377.7L331.5,375.8L333.1,373.8L334.7,371.8L336.2,369.8L337.7,367.8L339.1,365.7L340.5,363.5L341.9,361.4L343.3,359.2L344.6,357.0L345.8,354.8L347.0,352.5L348.2,350.2L349.4,347.9L350.5,345.5L351.5,343.2L352.5,340.8L353.5,338.4L354.5,335.9L355.4,333.4L356.2,330.9L357.0,328.4L357.8,325.9L358.5,323.4L359.2,320.8L359.8,318.2L360.4,315.6L360.9,313.0L361.4,310.3L361.8,307.7L362.2,305.0L362.6,302.3L362.9,299.6L363.1,296.9L363.3,294.2L363.5,291.5L363.6,288.7L363.6,286.0L363.6,286.0L363.6,283.2L363.6,280.5L363.5,277.7L363.4,274.9L363.2,272.2L362.9,269.4L362.7,266.6L362.3,263.8L361.9,261.1L361.5,258.3L361.0,255.5L360.5,252.8L359.9,250.0L359.3,247.2L358.6,244.5L357.8,241.7L357.1,239.0L356.2,236.3L355.4,233.5L354.4,230.8L353.4,228.1L352.4,225.5L351.4,222.8L350.2,220.1L349.1,217.5L347.9,214.9L346.6,212.3L345.3,209.7L343.9,207.1L342.5,204.6L341.1,202.1L339.6,199.6L338.1,197.1L336.5,194.7L334.9,192.2L333.2,189.8L331.5,187.5L329.8,185.1L328.0,182.8L326.2,180.6L324.3,178.3L322.4,176.1L320.5,173.9L318.5,171.8L316.5,169.6L314.4,167.6L312.3,165.5L310.2,163.5L308.1,161.6L305.9,159.6L303.7,157.7L301.4,155.9L299.1,154.1L296.8,152.3L294.5,150.6L292.1,148.9L289.7,147.3L287.3,145.7L284.9,144.1L282.4,142.6L279.9,141.1L277.4,139.7L274.8,138.4L272.3,137.0L269.7,135.8L267.1,134.5L264.5,133.4L261.9,132.2L259.2,131.2L256.6,130.1L253.9,129.2L251.2,128.2L248.5,127.3L245.8,126.5L243.1,125.7L240.3,125.0L237.6,124.3L234.9,123.7L232.1,123.2L229.4,122.6L226.6,122.2L223.8,121.8L221.1,121.4L218.3,121.1L215.6,120.8L212.8,120.6L210.0,120.5L207.3,120.4L204.5,120.3L201.8,120.3L199.1,120.4L196.3,120.5L193.6,120.6L190.9,120.8L188.2,121.1L185.5,121.4L182.8,121.8L180.2,122.2L177.5,122.7L174.9,123.2L172.2,123.7L169.6,124.3L167.1,125.0L164.5,125.7L161.9,126.5L159.4,127.3L156.9,128.1L154.4,129.0L151.9,130.0L149.5,131.0L147.1,132.0L144.7,133.1L142.3,134.2L140.0,135.4L137.7,136.6L135.4,137.9L133.1,139.2L130.9,140.5L128.7,141.9L126.5,143.3" stroke="#1c1ce6" stroke-width="1.15" fill="none"/><path d="M213.0,125.3L212.1,124.6L211.2,124.0L210.3,123.4L209.4,122.9L208.5,122.4L207.5,122.0L206.6,121.6L205.7,121.2L204.7,120.9L203.7,120.7L202.8,120.5L201.8,120.3L201.8,120.3L200.8,120.2L199.8,120.2L198.8,120.2L197.8,120.2L196.8,120.3L195.8,120.5L194.8,120.7L193.8,121.0L192.8,121.3L191.8,121.7L190.7,122.2L189.7,122.7L188.7,123.2L187.6,123.8L186.6,124.5L185.6,125.3L184.5,126.1L183.5,126.9L182.5,127.8L181.4,128.8L180.4,129.9L179.4,131.0L178.3,132.2L177.3,133.4L176.3,134.7L175.3,136.0L174.3,137.5L173.3,138.9L172.3,140.5L171.3,142.1L170.3,143.8L169.3,145.5L168.3,147.3L167.3,149.2L166.4,151.1L165.4,153.1L164.5,155.1L163.6,157.2L162.6,159.4L161.7,161.6L160.8,163.9L160.0,166.3L159.1,168.7L158.2,171.1L157.4,173.7L156.6,176.2L155.8,178.9L155.0,181.5L154.2,184.3L153.4,187.1L152.7,189.9L152.0,192.8L151.3,195.7L150.6,198.7L149.9,201.7L149.3,204.8L148.7,207.9L148.1,211.1L147.5,214.2L146.9,217.5L146.4,220.7L145.9,224.0L145.4,227.4L145.0,230.7L144.5,234.1L144.1,237.5L143.7,240.9L143.4,244.4L143.1,247.9L142.7,251.4L142.5,254.9L142.2,258.4L142.0,262.0L141.8,265.5L141.6,269.1L141.5,272.6L141.3,276.2L141.3,279.8L141.2,283.3L141.2,286.9L141.1,290.5L141.2,294.0L141.2,297.6L141.3,301.1L141.4,304.6L141.5,308.1L141.7,311.6L141.8,315.1L142.1,318.5L142.3,322.0L142.5,325.4L142.8,328.7L143.1,332.1L143.5,335.4L143.8,338.7L144.2,341.9L144.6,345.1L145.1,348.3L145.5,351.4L146.0,354.5L146.5,357.6L147.0,360.6L147.6,363.5L148.1,366.5L148.7,369.3L149.3,372.1L150.0,374.9L150.6,377.6L151.3,380.3L152.0,382.9L152.7,385.5L153.4,388.0L154.1,390.4L154.9,392.8L155.7,395.1L156.4,397.4L157.2,399.6L158.0,401.8L158.9,403.9L159.7,405.9L160.6,407.9L161.4,409.8L162.3,411.7L163.2,413.5L164.1,415.2L165.0,416.9L165.9,418.5L166.8,420.0L167.7,421.5L168.7,422.9L169.6,424.3L170.6,425.6L171.5,426.8L172.5,428.0L173.5,429.1L174.4,430.2L175.4,431.2L176.4,432.1L177.4,433.0L178.4,433.8L179.3,434.6L180.3,435.3L181.3,435.9L182.3,436.5L183.3,437.0L184.3,437.5L185.3,437.9L186.3,438.3L187.3,438.6L188.2,438.8L189.2,439.0L190.2,439.2L191.2,439.3L192.2,439.3L193.1,439.3L194.1,439.2L195.1,439.1L196.1,439.0L197.0,438.8L198.0,438.5L198.9,438.2L199.9,437.9L200.8,437.5L201.7,437.0L202.7,436.5L203.6,436.0L204.5,435.4" stroke="#dc1c1c" stroke-width="1.15" fill="none"/><path d="M359.5,275.1L360.1,275.6L360.7,276.1L361.2,276.6L361.7,277.1L362.2,277.6L362.6,278.2L363.0,278.7L363.3,279.2L363.6,279.8L363.8,280.3L364.0,280.9L364.2,281.4L364.3,282.0L364.3,282.5L364.3,283.1L364.3,283.7L364.2,284.2L364.1,284.8L363.9,285.4L363.6,286.0L363.6,286.0L363.3,286.6L363.0,287.2L362.6,287.8L362.2,288.4L361.7,289.0L361.1,289.6L360.5,290.2L359.8,290.8L359.1,291.4L358.3,292.0L357.5,292.6L356.6,293.2L355.7,293.9L354.7,294.5L353.6,295.1L352.5,295.7L351.3,296.3L350.1,297.0L348.8,297.6L347.4,298.2L346.0,298.8L344.6,299.4L343.0,300.1L341.4,300.7L339.8,301.3L338.1,301.9L336.3,302.5L334.5,303.1L332.6,303.7L330.6,304.3L328.6,304.9L326.6,305.5L324.5,306.1L322.3,306.7L320.0,307.2L317.8,307.8L315.4,308.4L313.0,308.9L310.5,309.5L308.0,310.0L305.5,310.6L302.8,311.1L300.2,311.6L297.4,312.1L294.7,312.6L291.8,313.1L289.0,313.6L286.0,314.1L283.1,314.6L280.1,315.0L277.0,315.5L273.9,315.9L270.8,316.3L267.6,316.8L264.4,317.2L261.1,317.5L257.9,317.9L254.5,318.3L251.2,318.6L247.8,319.0L244.4,319.3L241.0,319.6L237.5,319.9L234.0,320.2L230.5,320.5L227.0,320.7L223.5,320.9L219.9,321.2L216.4,321.4L212.8,321.6L209.2,321.7L205.6,321.9L202.0,322.0L198.4,322.2L194.8,322.3L191.2,322.4L187.6,322.5L184.1,322.5L180.5,322.6L176.9,322.6L173.4,322.6L169.8,322.6L166.3,322.6L162.8,322.5L159.3,322.5L155.9,322.4L152.4,322.3L149.0,322.2L145.6,322.1L142.3,322.0L139.0,321.8L135.7,321.6L132.4,321.5L129.2,321.3L126.1,321.0L122.9,320.8L119.9,320.6L116.8,320.3L113.8,320.0L110.9,319.7L108.0,319.4L105.2,319.1L102.4,318.8L99.6,318.4L96.9,318.1L94.3,317.7L91.7,317.3L89.2,316.9L86.8,316.5L84.4,316.1L82.0,315.7L79.8,315.2L77.5,314.8L75.4,314.3L73.3,313.8L71.3,313.4L69.3,312.9L67.4,312.4L65.6,311.9L63.8,311.3L62.1,310.8L60.5,310.3L58.9,309.7L57.4,309.2L56.0,308.6L54.6,308.1L53.3,307.5L52.1,307.0L50.9,306.4L49.8,305.8L48.8,305.2L47.8,304.6L46.9,304.0L46.0,303.4L45.3,302.8L44.5,302.2L43.9,301.6L43.3,301.0L42.8,300.4L42.3,299.8L41.9,299.2L41.6,298.6L41.3,297.9L41.1,297.3L40.9,296.7L40.8,296.1L40.7,295.5L40.8,294.9L40.8,294.2L40.9,293.6L41.1,293.0L41.3,292.4L41.6,291.8L42.0,291.2L42.4,290.6L42.8,290.0L43.3,289.4L43.8,288.8L44.4,288.2L45.0,287.6" stroke="#1ed81e" stroke-width="1.15" fill="none"/><ellipse cx="201" cy="278.9" rx="181.5" ry="178.5" stroke="#e6da1c" stroke-width="1.15" fill="none"/><path d="M19.799999999999997,556.2L21.6,559.6M23.4,556.2L20.6,562.2" stroke="#20d020" stroke-width="1.1" fill="none"/><path d="M34.6,571.4L37.8,575M37.8,571.4L34.6,575" stroke="#e02020" stroke-width="1.2" fill="none"/><path d="M18.2,572.6H21L18.2,576H21" stroke="#2020e8" stroke-width="1.1" fill="none"/><path d="M21.5,563V575" stroke="#20d020" stroke-width="1.3"/><path d="M22,575H30M30,576H33" stroke="#e02020" stroke-width="1.3"/></svg>
<svg width="1080" height="696" viewBox="0 0 1080 696"><path d="M0,60.6h1.2v1.2h-1.2zM2.2,60.6h1.2v1.2h-1.2zM0,63.4h1.2v1.2h-1.2zM2.2,63.4h1.2v1.2h-1.2z" fill="#9a9a9a"/><rect x="0" y="139" width="1.6" height="2.2" fill="#b8b8b8"/><rect x="0" y="178.4" width="1.2" height="1.6" fill="#3fb5c5"/><rect x="0" y="196.2" width="4.2" height="31" fill="#5a8db5"/><path d="M0,206.4h1v2.4h-1zM0,209.6h1.4v2h-1.4z" fill="#2f6f7a"/><rect x="0" y="232" width="1.2" height="23.5" fill="#383838"/><rect x="0" y="327.4" width="4.2" height="1.6" fill="#bdbdbd"/><rect x="0" y="337" width="1.3" height="24" fill="#c4c4c4"/><rect x="0" y="369" width="1.3" height="11" fill="#c4c4c4"/><rect x="0" y="382" width="1.3" height="12" fill="#c4c4c4"/><rect x="0" y="396" width="1.3" height="24" fill="#c4c4c4"/><rect x="0" y="432" width="1.3" height="24" fill="#c4c4c4"/><defs><linearGradient id="cyg" x1="0" y1="0" x2="1" y2="1"><stop offset="0" stop-color="#5fd0d8"/><stop offset="1" stop-color="#1aa0a8"/></linearGradient></defs><rect x="0" y="663" width="3" height="25" fill="url(#cyg)"/><path d="M824.2,202.3L826.5,205.2L831.8,198.4" stroke="#e0e0e0" stroke-width="1.9" fill="none" stroke-linecap="round" stroke-linejoin="round"/><path d="M896.8,290.80000000000007H905.2L901.0,295.6Z" fill="#c8c8c8"/><path d="M696.7,349.3H706.3L701.5,355Z" fill="#e8e8e8"/><path d="M881.8,370.35H890.2L886.0,375.15Z" fill="#c8c8c8"/><path d="M904.15,409.20000000000005H912.5500000000001L908.35,414.0Z" fill="#c8c8c8"/><path d="M876.05,447.1H884.45L880.25,451.9Z" fill="#c8c8c8"/><path d="M901.45,464.95000000000005H909.8500000000001L905.6500000000001,469.75Z" fill="#c8c8c8"/><path d="M698.8,497.9V507.7L704.9,502.8Z" fill="#e8e8e8"/><path d="M698.8,516.9V526.6L704.9,521.75Z" fill="#e8e8e8"/><path d="M687.8,541V551L693.6,546Z" fill="#e8e8e8"/><path d="M687.8,559.8V570L693.6,564.9Z" fill="#e8e8e8"/><path d="M1048.6,203.5H1056.6L1052.6,199.6Z" fill="#bbbbbb"/><path d="M1048.6,563.4H1056.6L1052.6,567.4Z" fill="#bbbbbb"/><path d="M803,576.5H932" stroke="#6a6a6a" stroke-width="1" stroke-dasharray="1 2"/><path d="M951.6,141.6H962.3V151H951.6V149.2M951.6,143.4V141.6" stroke="#c8c8c8" stroke-width="1" fill="none"/><path d="M949,143.4L953.8,146.3L949,149.2Z" fill="#c8c8c8"/><path d="M960.3,162.4V160.7H949.7V170.3H960.3V168.4" stroke="#c8c8c8" stroke-width="1" fill="none"/><path d="M958.6,162.6L963.4,165.5L958.6,168.4Z" fill="#c8c8c8"/><rect x="14.8" y="29.4" width="11.6" height="11.6" fill="#c9b93a" stroke="#2a2a2a" stroke-width="0.8"/><rect x="19.6" y="24.900000000000002" width="2" height="2.6" fill="#cfcfcf"/><rect x="19.6" y="42.900000000000006" width="2" height="2.6" fill="#cfcfcf"/><rect x="10.3" y="34.2" width="2.6" height="2" fill="#cfcfcf"/><rect x="28.3" y="34.2" width="2.6" height="2" fill="#cfcfcf"/><rect x="12.900000000000002" y="27.500000000000004" width="2" height="2" fill="#cfcfcf" opacity="0.85"/><rect x="26.3" y="27.500000000000004" width="2" height="2" fill="#cfcfcf" opacity="0.85"/><rect x="12.900000000000002" y="40.900000000000006" width="2" height="2" fill="#cfcfcf" opacity="0.85"/><rect x="26.3" y="40.900000000000006" width="2" height="2" fill="#cfcfcf" opacity="0.85"/><path d="M50.5,28.400000000000002L56.5,31.6V38.6L50.5,41.800000000000004L44.5,38.6V31.6Z" fill="#c9b93a" stroke="#2a2a2a" stroke-width="0.8"/><path d="M44.5,31.6L50.5,34.800000000000004L56.5,31.6M50.5,34.800000000000004V41.800000000000004" stroke="#6e6420" stroke-width="0.9" fill="none"/><rect x="49.5" y="24.900000000000002" width="2" height="2.6" fill="#cfcfcf"/><rect x="49.5" y="42.900000000000006" width="2" height="2.6" fill="#cfcfcf"/><rect x="40.2" y="34.2" width="2.6" height="2" fill="#cfcfcf"/><rect x="58.2" y="34.2" width="2.6" height="2" fill="#cfcfcf"/><rect x="42.8" y="27.500000000000004" width="2" height="2" fill="#cfcfcf" opacity="0.85"/><rect x="56.2" y="27.500000000000004" width="2" height="2" fill="#cfcfcf" opacity="0.85"/><rect x="42.8" y="40.900000000000006" width="2" height="2" fill="#cfcfcf" opacity="0.85"/><rect x="56.2" y="40.900000000000006" width="2" height="2" fill="#cfcfcf" opacity="0.85"/><path d="M76.5,26.6H85.8L83.8,29.4H78.5Z" fill="#c9b93a"/><rect x="80" y="32.5" width="2.4" height="12.5" fill="#cfcfcf"/><path d="M71.5,37.2L76.8,31.4M90.3,37.2L85.2,31.4" stroke="#cfcfcf" stroke-width="2.2"/><path d="M70.5,41.4L73.5,38.4M75,37L78,35.3M91.8,41.4L88.8,38.4M87.3,37L84.3,35.3" stroke="#cfcfcf" stroke-width="1.4" opacity="0.5"/><path d="M101.3,35.4A9.5,9.5 0 0 1 120.3,35.4" stroke="#c9b93a" stroke-width="1.4" fill="none"/><path d="M101.3,35.4A9.5,9.5 0 0 0 120.3,35.4" stroke="#cfcfcf" stroke-width="1.4" fill="none"/><path d="M110.8,25.9A4.8,9.5 0 0 0 110.8,44.9A4.8,9.5 0 0 0 110.8,25.9" stroke="none" fill="none"/><path d="M106.2,35.4C106.2,30.4 108.3,26.4 110.8,25.9C113.3,26.4 115.39999999999999,30.4 115.39999999999999,35.4M102.5,30.799999999999997H119.1" stroke="#c9b93a" stroke-width="1.2" fill="none"/><path d="M106.2,35.4C106.2,40.4 108.3,44.4 110.8,44.9C113.3,44.4 115.39999999999999,40.4 115.39999999999999,35.4M102.5,40.0H119.1" stroke="#cfcfcf" stroke-width="1.2" fill="none"/><rect x="98.8" y="34.6" width="24" height="1.8" fill="#c9b93a"/><path d="M131.7,35.4A9.5,9.5 0 0 1 150.7,35.4" stroke="#c9b93a" stroke-width="1.4" fill="none"/><path d="M131.7,35.4A9.5,9.5 0 0 0 150.7,35.4" stroke="#cfcfcf" stroke-width="1.4" fill="none"/><path d="M141.2,25.9A4.8,9.5 0 0 0 141.2,44.9A4.8,9.5 0 0 0 141.2,25.9" stroke="none" fill="none"/><path d="M136.6,35.4C136.6,30.4 138.7,26.4 141.2,25.9C143.7,26.4 145.79999999999998,30.4 145.79999999999998,35.4M132.89999999999998,30.799999999999997H149.5" stroke="#c9b93a" stroke-width="1.2" fill="none"/><path d="M136.6,35.4C136.6,40.4 138.7,44.4 141.2,44.9C143.7,44.4 145.79999999999998,40.4 145.79999999999998,35.4M132.89999999999998,40.0H149.5" stroke="#cfcfcf" stroke-width="1.2" fill="none"/><rect x="129.2" y="34.6" width="24" height="1.8" fill="#c9b93a"/><rect x="135.79999999999998" y="30.8" width="10.6" height="9.8" fill="#c4c4c4" stroke="#2a2a2a" stroke-width="0.6"/><path d="M161.8,35.3A9.5,9.5 0 0 0 180.8,35.3" stroke="#cfcfcf" stroke-width="1.3" fill="none"/><rect x="159.10000000000002" y="34.5" width="24.4" height="1.8" fill="#c9b93a"/><path d="M165.70000000000002,34.5A5.6,5.6 0 0 1 176.9,34.5Z" fill="#c9b93a"/><path d="M171.3,24.499999999999996L173.10000000000002,27.699999999999996H169.5Z M164.0,27.699999999999996L167.3,28.699999999999996L165.5,30.9Z M178.60000000000002,27.699999999999996L175.3,28.699999999999996L177.10000000000002,30.9Z M161.70000000000002,32.699999999999996H164.10000000000002V34.099999999999994H161.70000000000002Z M178.5,32.699999999999996H180.9V34.099999999999994H178.5Z" fill="#c9b93a"/><rect x="200.0" y="20.8" width="1.6" height="29.8" fill="#9a9a9a"/><rect x="348.2" y="20.8" width="1.6" height="29.8" fill="#9a9a9a"/><rect x="466.09999999999997" y="20.8" width="1.6" height="29.8" fill="#9a9a9a"/><rect x="554.2" y="20.8" width="1.6" height="29.8" fill="#9a9a9a"/><path d="M229,25L238,30V40.4L229,45.6L220,40.4V30Z" stroke="#bdbdbd" stroke-width="1.1" fill="none"/><path d="M229,29.8L234,32.4V38L229,40.6L224,38V32.4Z" fill="#3fb5c5"/><path d="M220,30L224,32.4M238,30L234,32.4M229,40.6V45.6M224,32.4L229,35L234,32.4M229,35V40.6" stroke="#bdbdbd" stroke-width="1" fill="none"/><path d="M238.3,24.6V31M235.1,27.8H241.5" stroke="#e0e0e0" stroke-width="1.6"/><path d="M258.9,25L267.9,30V40.4L258.9,45.6L249.89999999999998,40.4V30Z" stroke="#bdbdbd" stroke-width="1.1" fill="none"/><path d="M258.9,29.8L263.9,32.4V38L258.9,40.6L253.89999999999998,38V32.4Z" fill="#3fb5c5"/><path d="M249.89999999999998,30L253.89999999999998,32.4M267.9,30L263.9,32.4M258.9,40.6V45.6M253.89999999999998,32.4L258.9,35L263.9,32.4M258.9,35V40.6" stroke="#bdbdbd" stroke-width="1" fill="none"/><path d="M264,41.5H262.8V46.5H264" stroke="#c8c8c8" stroke-width="1" fill="none"/><path d="M264.5,42.2H268.5V40.4L272,44L268.5,47.6V45.8H264.5Z" fill="#d0d0d0"/><circle cx="289.4" cy="34.9" r="9.2" stroke="#c8c8c8" stroke-width="1.2" fill="none" stroke-dasharray="2.6 1.8"/><path d="M292.2,28.2C287.5,27 285.2,31 288,34C291,37.2 292.5,40.6 287,42" stroke="#c9b93a" stroke-width="1.5" fill="none"/><path d="M319.3,24.6L328.7,29.8V40.4L319.3,45.6L309.90000000000003,40.4V29.8Z" fill="#3fb5c5"/><path d="M311.3,32C315.3,29 319.3,34 327.3,31M310.3,36.5C315.3,33.5 319.3,38 328.3,35M311.3,40.5C315.3,37.5 319.3,42 327.3,39.5M319.3,34V45" stroke="#1d5d66" stroke-width="1" fill="none"/><rect x="367" y="25" width="21" height="21" fill="#3fb5c5"/><rect x="367" y="25" width="21" height="3.8" fill="#d4d4d4"/><path d="M369,26.9H375.5" stroke="#3a3a3a" stroke-width="1.2" stroke-dasharray="1.2 0.8"/><rect x="370.5" y="30.5" width="14" height="12.5" fill="#2f2f2f"/><rect x="372" y="31.5" width="11" height="10.5" fill="#2f2f2f"/><rect x="372.00" y="31.50" width="3.67" height="3.50" fill="#d0d0d0"/><rect x="372.00" y="38.50" width="3.67" height="3.50" fill="#d0d0d0"/><rect x="375.67" y="35.00" width="3.67" height="3.50" fill="#d0d0d0"/><rect x="379.33" y="31.50" width="3.67" height="3.50" fill="#d0d0d0"/><rect x="379.33" y="38.50" width="3.67" height="3.50" fill="#d0d0d0"/><rect x="399.4" y="27.4" width="15.6" height="15.6" fill="#333333"/><rect x="399.40" y="27.40" width="5.20" height="5.20" fill="#c9b93a"/><rect x="399.40" y="37.80" width="5.20" height="5.20" fill="#c9b93a"/><rect x="404.60" y="32.60" width="5.20" height="5.20" fill="#c9b93a"/><rect x="409.80" y="27.40" width="5.20" height="5.20" fill="#c9b93a"/><rect x="409.80" y="37.80" width="5.20" height="5.20" fill="#c9b93a"/><path d="M411.2,31.3A4.2,4.2 0 1 1 418.6,30.5" stroke="#c8c8c8" stroke-width="1.6" fill="none"/><path d="M416.6,30.4L420.2,29.5L419.9,33.3Z" fill="#c8c8c8"/><rect x="429.4" y="27.4" width="15.6" height="15.6" fill="#333333"/><rect x="429.40" y="27.40" width="5.20" height="5.20" fill="#c9b93a"/><rect x="429.40" y="37.80" width="5.20" height="5.20" fill="#c9b93a"/><rect x="434.60" y="32.60" width="5.20" height="5.20" fill="#c9b93a"/><rect x="439.80" y="27.40" width="5.20" height="5.20" fill="#c9b93a"/><rect x="439.80" y="37.80" width="5.20" height="5.20" fill="#c9b93a"/><path d="M442,40L449.5,47.5M449.5,40L442,47.5" stroke="#d0d0d0" stroke-width="1.8"/><rect x="485.7" y="26.1" width="19.7" height="19.2" fill="none" stroke="#c9b93a" stroke-width="1.2"/><path d="M492,45.3H499" stroke="#444" stroke-width="2"/><path d="M492,43.6H499L495.5,47.3Z" fill="#c9b93a"/><rect x="489" y="33" width="8" height="7.6" fill="#c4c4c4"/><circle cx="498.5" cy="32.4" r="4.1" fill="#c4c4c4"/><rect x="516.2" y="26.1" width="18.8" height="19.2" fill="none" stroke="#c9b93a" stroke-width="1.2"/><path d="M522,45.3H529" stroke="#444" stroke-width="2"/><path d="M522,43.6H529L525.5,47.3Z" fill="#c9b93a"/><rect x="519.8" y="29.8" width="11.4" height="11.4" fill="#333333"/><rect x="519.80" y="29.80" width="3.80" height="3.80" fill="#d0d0d0"/><rect x="519.80" y="37.40" width="3.80" height="3.80" fill="#d0d0d0"/><rect x="523.60" y="33.60" width="3.80" height="3.80" fill="#d0d0d0"/><rect x="527.40" y="29.80" width="3.80" height="3.80" fill="#d0d0d0"/><rect x="527.40" y="37.40" width="3.80" height="3.80" fill="#d0d0d0"/><rect x="571" y="24.8" width="24" height="21.2" fill="#d0d0d0"/><rect x="572.3" y="28" width="21.4" height="14.8" fill="#3a3a3a"/><path d="M572.5,26.4H593.5M572.5,44.4H593.5" stroke="#555" stroke-width="1" stroke-dasharray="1.6 1.4"/><path d="M576.5,35.4Q583,28.8 589.5,35.4Q583,42 576.5,35.4Z" fill="none" stroke="#d0d0d0" stroke-width="1.3"/><circle cx="583" cy="35.4" r="3.2" fill="none" stroke="#d0d0d0" stroke-width="1.2"/><circle cx="583.6" cy="34.6" r="0.8" fill="#d0d0d0"/><rect x="601" y="24.8" width="24.399999999999977" height="21.2" fill="#d0d0d0"/><rect x="602.3" y="28" width="21.799999999999976" height="14.8" fill="#3a3a3a"/><path d="M602.5,26.4H623.9M602.5,44.4H623.9" stroke="#555" stroke-width="1" stroke-dasharray="1.6 1.4"/><path d="M609.8,30.4L617.8,35.4L609.8,40.4Z" fill="#cfcfcf"/><rect x="1067.2" y="21" width="9.5" height="29.6" fill="#393939"/><path d="M1067.9,27.9H1076L1072,22.7Z M1067.9,42.9H1076L1072,47.5Z" fill="#b4b4b4"/><circle cx="1071.9" cy="35.7" r="4.1" fill="#5a5a5a"/><rect x="15.799999999999999" y="79.5" width="1.8" height="13.5" fill="#8a8a8a"/><rect x="15.399999999999999" y="82.5" width="2.6" height="7" rx="1" fill="#9c9c9c"/><rect x="139.79999999999998" y="79.5" width="1.8" height="13.5" fill="#8a8a8a"/><rect x="139.39999999999998" y="82.5" width="2.6" height="7" rx="1" fill="#9c9c9c"/><rect x="263.8" y="79.5" width="1.8" height="13.5" fill="#8a8a8a"/><rect x="263.4" y="82.5" width="2.6" height="7" rx="1" fill="#9c9c9c"/><rect x="387.8" y="79.5" width="1.8" height="13.5" fill="#8a8a8a"/><rect x="387.4" y="82.5" width="2.6" height="7" rx="1" fill="#9c9c9c"/><rect x="462.8" y="79.5" width="1.8" height="13.5" fill="#8a8a8a"/><rect x="462.4" y="82.5" width="2.6" height="7" rx="1" fill="#9c9c9c"/><rect x="488.5" y="79.5" width="1.8" height="13.5" fill="#8a8a8a"/><rect x="488.09999999999997" y="82.5" width="2.6" height="7" rx="1" fill="#9c9c9c"/><rect x="547.3000000000001" y="79.5" width="1.8" height="13.5" fill="#8a8a8a"/><rect x="546.9000000000001" y="82.5" width="2.6" height="7" rx="1" fill="#9c9c9c"/><rect x="24" y="83.4" width="8.2" height="5.8" rx="0.6" fill="#c8c8c8"/><path d="M32.6,86.3L36.3,82.4V90.2Z" fill="#c8c8c8"/><path d="M40.5,82.3H48V88H40.5Z" fill="#c8c8c8"/><path d="M49,85.2L52.6,81.6V89L49,85.2Z" fill="#c8c8c8"/><rect x="40" y="86.6" width="6.6" height="5.2" fill="#444"/><rect x="40.6" y="87.4" width="5.4" height="4.4" fill="#3fb5c5"/><path d="M41.6,87.6V85.8A1.7,1.7 0 0 1 45,85.8V87.6" stroke="#3fb5c5" stroke-width="1.1" fill="none"/><rect x="42.9" y="88.8" width="0.9" height="1.8" fill="#2a6e78"/><path d="M56.6,82.3H64.2V87.5H56.6Z" fill="#c8c8c8"/><path d="M65,85L68.6,81.6V88.6Z" fill="#c8c8c8"/><circle cx="60.3" cy="88.4" r="3.6" fill="#444"/><circle cx="60.3" cy="88.4" r="2.4" stroke="#3fb5c5" stroke-width="1.6" fill="none" stroke-dasharray="1.3 0.6"/><path d="M76.7,80.8H81.7V90.6L79.2,88.6L76.7,90.6Z" fill="#c8c8c8"/><path d="M93.3,85.8L98.6,81V88.6L93.3,91.2Z" fill="#3fb5c5"/><path d="M89.6,91.4L92.2,88.8M97,89.6H101.5L99.2,91.6H95" stroke="#a8a8a8" stroke-width="1" fill="none"/><circle cx="114.6" cy="86.4" r="2.8" stroke="#3fb5c5" stroke-width="1.4" fill="none"/><path d="M112.6,88.6L110.2,91" stroke="#3fb5c5" stroke-width="1.8"/><path d="M111.3,84V80.8M109.6,82.4L111.3,80.6L113,82.4M111.3,84H106.8M108.4,82.4L106.6,84L108.4,85.6" stroke="#c0c0c0" stroke-width="1" fill="none"/><path d="M125.6,88.8L131.6,82.6" stroke="#c0c0c0" stroke-width="2.6"/><circle cx="124.5" cy="90" r="1.5" fill="#3fb5c5"/><path d="M128.4,89.6A2.3,2.3 0 1 0 131.6,87.6" stroke="#9a9a9a" stroke-width="0.9" fill="none"/><rect x="146.2" y="78.2" width="15.7" height="15.7" fill="#5a8db5"/><rect x="149.4" y="81.2" width="9.6" height="9.6" fill="#2c2c2c"/><path d="M149.4,81.2V90.8M152.6,81.2V90.8M155.8,81.2V90.8M159,81.2V90.8M149.4,81.2H159M149.4,84.4H159M149.4,87.6H159M149.4,90.8H159" stroke="#e4e4e4" stroke-width="1.1"/><rect x="164.3" y="81.3" width="12.6" height="9.6" fill="#d0d0d0"/><rect x="165.4" y="83.2" width="10.4" height="5.8" fill="#3a3a3a"/><path d="M165.2,82.3H176M165.2,90H176" stroke="#666" stroke-width="0.8" stroke-dasharray="1.2 1"/><rect x="181.4" y="81.6" width="10.99999999999999" height="9.4" fill="#333" stroke="#d0d0d0" stroke-width="1.2"/><circle cx="186.9" cy="86.3" r="2.6" fill="#3fb5c5"/><rect x="195.6" y="78.2" width="15.3" height="15.7" fill="#393939"/><rect x="196.8" y="79.4" width="12.9" height="13.3" fill="#4e4e4e"/><circle cx="203.2" cy="86" r="3.1" fill="#3e3e3e"/><rect x="213.9" y="81.6" width="11.49999999999999" height="9.4" fill="#333" stroke="#d0d0d0" stroke-width="1.2"/><path d="M219.6,82.4V90.2M215.3,86.3H224" stroke="#3fb5c5" stroke-width="1.2" stroke-dasharray="1 0.8"/><rect x="230.79999999999998" y="81.6" width="10.8" height="9.4" fill="#333" stroke="#d0d0d0" stroke-width="1.2"/><circle cx="238.4" cy="84.6" r="2.4" fill="#3fb5c5"/><path d="M232.4,89.6L234.6,85.8L236.8,89.6Z" fill="#3fb5c5"/><rect x="246.4" y="81.6" width="11.49999999999999" height="9.4" fill="#333" stroke="#d0d0d0" stroke-width="1.2"/><path d="M248.8,83H255.6M252.2,83V89.6" stroke="#3fb5c5" stroke-width="1.6"/><path d="M278.5,79.7L283.981,82.85V89.15L278.5,92.3L273.019,89.15V82.85ZM273.019,82.85L278.5,86L283.981,82.85M278.5,86V92.3" stroke="#c8c8c8" stroke-width="1" fill="none" stroke-linejoin="round"/><rect x="286.7" y="78.2" width="15.4" height="15.7" fill="#5a8db5"/><path d="M294.4,79.4L300.142,82.7V89.3L294.4,92.6L288.65799999999996,89.3V82.7Z" fill="#52c4d2"/><path d="M294.4,79.4L300.142,82.7V89.3L294.4,92.6L288.65799999999996,89.3V82.7ZM288.65799999999996,82.7L294.4,86L300.142,82.7M294.4,86V92.6" stroke="#2a4550" stroke-width="1" fill="none" stroke-linejoin="round"/><path d="M294.4,79.4L300.1,82.7L294.4,86L288.7,82.7Z" fill="#8adfe8"/><path d="M294.4,79.4L300.142,82.7V89.3L294.4,92.6L288.65799999999996,89.3V82.7ZM288.65799999999996,82.7L294.4,86L300.142,82.7M294.4,86V92.6" stroke="#2a4550" stroke-width="1" fill="none" stroke-linejoin="round"/><path d="M310.8,80.6A5.4,5.4 0 0 0 310.8,91.4Z" fill="#c8c8c8"/><path d="M310.8,80.6A5.4,5.4 0 0 1 310.8,91.4Z" fill="#777"/><path d="M311.8,81.6h1.4v1.4h-1.4zM313.2,83h1.4v1.4h-1.4zM311.8,84.4h1.4v1.4h-1.4zM313.2,85.8h1.4v1.4h-1.4zM311.8,87.2h1.4v1.4h-1.4zM313.2,88.6h1.4v1.4h-1.4zM314.6,84.4h1.2v1.4h-1.2zM314.6,87.2h1.2v1.4h-1.2zM314.6,81.8h1v1.2h-1z" fill="#ddd"/><path d="M327.6,79.7L333.081,82.85V89.15L327.6,92.3L322.119,89.15V82.85ZM322.119,82.85L327.6,86L333.081,82.85M327.6,86V92.3" stroke="#c8c8c8" stroke-width="1" fill="none" stroke-linejoin="round"/><path d="M327.6,80.6L331.2,82.6V87.2L327.6,89.2L324,87.2V82.6Z" fill="#3fb5c5" opacity="0.9"/><path d="M327.6,79.7L333.081,82.85V89.15L327.6,92.3L322.119,89.15V82.85ZM322.119,82.85L327.6,86L333.081,82.85M327.6,86V92.3" stroke="#c8c8c8" stroke-width="1" fill="none" stroke-linejoin="round"/><defs><pattern id="chk" width="2.4" height="2.4" patternUnits="userSpaceOnUse"><rect width="2.4" height="2.4" fill="#333"/><rect width="1.2" height="1.2" fill="#d8d8d8"/><rect x="1.2" y="1.2" width="1.2" height="1.2" fill="#d8d8d8"/></pattern></defs><circle cx="343.6" cy="86" r="5.6" fill="url(#chk)"/><circle cx="360.2" cy="84.6" r="3.4" fill="#d0d0d0"/><rect x="358.8" y="87" width="2.8" height="5" fill="#d0d0d0"/><path d="M354.6,85.6H356.2M364.2,85.6H365.8M360.2,79V80.2M356.4,80.8L357.3,81.7M364,80.8L363.1,81.7" stroke="#d0d0d0" stroke-width="1.2"/><circle cx="378.3" cy="85.4" r="3.8" fill="#3fb5c5"/><path d="M369.6,88.6L373.4,86.2M370.6,90.4L374.4,88M372,91.8L375.6,89.6" stroke="#b0b0b0" stroke-width="0.9"/><circle cx="401.7" cy="84" r="4.4" fill="#cfcfcf"/><path d="M396.8,90.4L399.4,88.8L402,90.4L404.6,88.8L407.2,90.4" stroke="#3fb5c5" stroke-width="1.1" fill="none"/><path d="M399.2,87.6l1,1M401.4,87.6l1,1M403.6,87.6l1,1" stroke="#555" stroke-width="0.8"/><circle cx="415.6" cy="88.6" r="3.2" fill="#555"/><circle cx="418.2" cy="86.2" r="3.4" fill="#777"/><circle cx="421" cy="83.6" r="3.6" fill="#c8c8c8"/><path d="M435.4,81.4A4.6,4.6 0 0 0 435.4,90.6" stroke="#3fb5c5" stroke-width="2" fill="none"/><path d="M436.4,81.2L439.6,83M440.4,85.6V87.4M439.6,89.6L436.4,91.2" stroke="#d0d0d0" stroke-width="1.6" stroke-dasharray="1.6 0.6" fill="none"/><rect x="443.6" y="78.2" width="15.3" height="15.7" fill="#393939"/><rect x="445.4" y="80.4" width="6.6" height="6.6" fill="#3f4f54"/><rect x="448.6" y="83.6" width="8.6" height="8.6" fill="#446068"/><rect x="472.4" y="81.2" width="6.4" height="6.6" fill="none" stroke="#3fb5c5" stroke-width="1.1" stroke-dasharray="1.6 1"/><path d="M478.2,83.4L483.6,88.2L481,88.6L482.6,91.6L481.4,92.2L479.8,89.2L478.2,90.8Z" fill="#c8c8c8"/><rect x="496.6" y="79.6" width="14" height="13" fill="#393939"/><path d="M502.2,80.6H508.8V87.2H506.8V82.6H502.2Z" fill="#d8d8d8"/><rect x="498" y="84.4" width="6.6" height="6.6" fill="#d8d8d8"/><rect x="503.2" y="83.6" width="3.6" height="3.6" fill="#888"/><rect x="512.8" y="79.6" width="13" height="13" fill="#393939"/><path d="M518.6,80.8H524.6V87H522.6V82.8H518.6Z" fill="#d8d8d8"/><rect x="514.4" y="84.4" width="6.6" height="6.6" fill="#d8d8d8"/><rect x="529.4" y="79.6" width="13" height="13" fill="#393939"/><rect x="530.6" y="80.8" width="10.4" height="10.4" fill="none" stroke="#d0d0d0" stroke-width="1.1"/><path d="M532.6,82.8L538.6,88.8" stroke="#d0d0d0" stroke-width="1.2"/><path d="M537.4,87.6L539.6,89.8L540.2,87Z" fill="#d0d0d0"/><circle cx="562.6" cy="86" r="4.9" fill="#d8d8d8"/><path d="M560.4,83.2L565.2,83.8L563.6,88.6L559.6,87.4Z" fill="#444"/><path d="M562.6,81.1L561,84.2M567.4,85.4L563.8,85.6M564.6,90.4L563,87.4M557.8,86.8L561,86.4" stroke="#444" stroke-width="0.9"/><rect x="571.9" y="79.2" width="32.6" height="12.2" rx="2" fill="#2b2b2b"/><rect x="624.8" y="79.2" width="31.9" height="12.2" rx="2" fill="#2b2b2b"/><rect x="614.2" y="81" width="5" height="10" fill="#d0d0d0"/><path d="M614.2,81.6A4.4,4.4 0 0 0 614.2,90.4Z" fill="#d0d0d0"/><path d="M614.6,82.6A3.4,3.4 0 0 1 614.6,89.4Z" fill="#444"/><rect x="659.6" y="79.2" width="3.6" height="13.8" fill="#5a8db5"/><path d="M662.8,83A3,3 0 0 0 662.8,89" stroke="#3fb5c5" stroke-width="1.2" fill="none"/></svg>
<div class="t" style="left:12.70px;top:6.11px;font-size:10.5px;line-height:10.5px;color:#a9a9a9;letter-spacing:-0.220px;transform:scaleX(0.9409);transform-origin:0 0;">Curves / Surfaces</div><div class="t" style="left:107.70px;top:6.11px;font-size:10.5px;line-height:10.5px;color:#a9a9a9;letter-spacing:-0.079px;">Poly Modeling</div><div class="t" style="left:192.30px;top:6.11px;font-size:10.5px;line-height:10.5px;color:#a9a9a9;letter-spacing:-0.025px;">Sculpting</div><div class="t" style="left:255.30px;top:6.11px;font-size:10.5px;line-height:10.5px;color:#a9a9a9;letter-spacing:0.015px;">Rigging</div><div class="t" style="left:311.00px;top:6.11px;font-size:10.5px;line-height:10.5px;color:#a9a9a9;letter-spacing:-0.088px;">Animation</div><div class="t" style="left:377.30px;top:6.11px;font-size:10.5px;line-height:10.5px;color:#a9a9a9;letter-spacing:-0.182px;">Rendering</div><div class="t" style="left:444.30px;top:6.11px;font-size:10.5px;line-height:10.5px;color:#a9a9a9;letter-spacing:-0.220px;transform:scaleX(0.9013);transform-origin:0 0;">FX</div><div class="t" style="left:475.70px;top:6.11px;font-size:10.5px;line-height:10.5px;color:#a9a9a9;letter-spacing:-0.220px;transform:scaleX(0.9419);transform-origin:0 0;">FX Caching</div><div class="t" style="left:545.30px;top:6.11px;font-size:10.5px;line-height:10.5px;color:#a9a9a9;letter-spacing:-0.220px;transform:scaleX(0.9751);transform-origin:0 0;">Custom</div><div class="t" style="left:599.30px;top:6.11px;font-size:10.5px;line-height:10.5px;color:#eeeeee;font-weight:bold;-webkit-text-stroke:0;letter-spacing:-0.220px;transform:scaleX(0.9536);transform-origin:0 0;">Arnold</div><div class="t" style="left:650.70px;top:6.11px;font-size:10.5px;line-height:10.5px;color:#a9a9a9;letter-spacing:-0.194px;">Bifrost</div><div class="t" style="left:699.30px;top:6.11px;font-size:10.5px;line-height:10.5px;color:#a9a9a9;letter-spacing:-0.220px;transform:scaleX(0.9401);transform-origin:0 0;">MASH</div><div class="t" style="left:746.70px;top:6.11px;font-size:10.5px;line-height:10.5px;color:#a9a9a9;letter-spacing:-0.104px;">Motion Graphics</div><div class="t" style="left:841.00px;top:6.11px;font-size:10.5px;line-height:10.5px;color:#a9a9a9;letter-spacing:-0.220px;transform:scaleX(0.9354);transform-origin:0 0;">XGen</div><div class="t" style="left:885.70px;top:6.11px;font-size:10.5px;line-height:10.5px;color:#a9a9a9;letter-spacing:-0.220px;transform:scaleX(0.8989);transform-origin:0 0;">VRay</div><div class="t" style="left:678.90px;top:63.53px;font-size:10px;line-height:10px;color:#dddddd;letter-spacing:0.223px;">Attribute Editor</div><div class="t" style="left:678.30px;top:78.83px;font-size:10px;line-height:10px;color:#c4c4c4;letter-spacing:-0.188px;">List</div><div class="t" style="left:705.50px;top:78.83px;font-size:10px;line-height:10px;color:#c4c4c4;letter-spacing:-0.189px;">Selected</div><div class="t" style="left:755.30px;top:78.83px;font-size:10px;line-height:10px;color:#c4c4c4;letter-spacing:-0.134px;">Focus</div><div class="t" style="left:794.20px;top:78.83px;font-size:10px;line-height:10px;color:#c4c4c4;letter-spacing:0.261px;">Attributes</div><div class="t" style="left:851.00px;top:78.83px;font-size:10px;line-height:10px;color:#c4c4c4;letter-spacing:0.295px;">Show</div><div class="t" style="left:888.70px;top:78.83px;font-size:10px;line-height:10px;color:#c4c4c4;letter-spacing:0.207px;">Help</div><div class="t" style="left:685.40px;top:110.03px;font-size:10px;line-height:10px;color:#9a9a9a;letter-spacing:-0.111px;">pSphere1</div><div class="t" style="left:748.50px;top:110.03px;font-size:10px;line-height:10px;color:#e8e8e8;font-weight:bold;-webkit-text-stroke:0;letter-spacing:-0.220px;transform:scaleX(0.9693);transform-origin:0 0;">pSphereShape1</div><div class="t" style="left:839.00px;top:110.03px;font-size:10px;line-height:10px;color:#9a9a9a;letter-spacing:-0.116px;">polySphere1</div><div class="t" style="left:914.00px;top:110.03px;font-size:10px;line-height:10px;color:#9a9a9a;letter-spacing:-0.142px;">aiStandardSurface1</div><div class="t" style="left:773.67px;top:152.73px;font-size:10px;line-height:10px;color:#bdbdbd;letter-spacing:-0.220px;transform:scaleX(1.0025);transform-origin:100% 0;">mesh:</div><div class="t" style="left:809.70px;top:152.73px;font-size:10px;line-height:10px;color:#dddddd;letter-spacing:-0.166px;">pSphereShape1</div><div class="t" style="left:989.32px;top:134.34px;font-size:10px;line-height:10px;color:#e4e4e4;font-weight:bold;-webkit-text-stroke:0;letter-spacing:-0.220px;transform:scaleX(0.9417);transform-origin:50% 0;">Focus</div><div class="t" style="left:987.32px;top:153.03px;font-size:10px;line-height:10px;color:#7e7e7e;letter-spacing:-0.220px;transform:scaleX(0.9547);transform-origin:50% 0;">Presets</div><div class="t" style="left:975.30px;top:172.73px;font-size:10px;line-height:10px;color:#e4e4e4;font-weight:bold;-webkit-text-stroke:0;letter-spacing:-0.220px;transform:scaleX(1.0042);transform-origin:50% 0;">Show</div><div class="t" style="left:1008.81px;top:172.73px;font-size:10px;line-height:10px;color:#e4e4e4;font-weight:bold;-webkit-text-stroke:0;letter-spacing:-0.024px;">Hide</div><div class="t" style="left:838.60px;top:197.63px;font-size:10px;line-height:10px;color:#c4c4c4;letter-spacing:-0.115px;">Export Reference Positions</div><div class="t" style="left:838.60px;top:214.13px;font-size:10px;line-height:10px;color:#c4c4c4;letter-spacing:-0.162px;">Export Reference Normals</div><div class="t" style="left:838.60px;top:230.23px;font-size:10px;line-height:10px;color:#c4c4c4;letter-spacing:-0.113px;">Export Reference Tangents</div><div class="t" style="left:749.72px;top:249.97px;font-size:10.2px;line-height:10.2px;color:#c4c4c4;letter-spacing:-0.220px;transform:scaleX(0.9078);transform-origin:100% 0;">SSS Set Name</div><div class="t" style="left:718.62px;top:270.57px;font-size:10.2px;line-height:10.2px;color:#c4c4c4;letter-spacing:-0.021px;">Motion Vector Source</div><div class="t" style="left:826.30px;top:271.07px;font-size:10.2px;line-height:10.2px;color:#dddddd;letter-spacing:-0.196px;">velocityPV</div><div class="t" style="left:729.76px;top:289.57px;font-size:10.2px;line-height:10.2px;color:#c4c4c4;letter-spacing:0.144px;">Motion Vector Unit</div><div class="t" style="left:826.60px;top:290.37px;font-size:10.2px;line-height:10.2px;color:#dddddd;letter-spacing:-0.220px;transform:scaleX(0.9340);transform-origin:0 0;">Per Frame</div><div class="t" style="left:726.27px;top:308.67px;font-size:10.2px;line-height:10.2px;color:#c4c4c4;letter-spacing:-0.067px;">Motion Vector Scale</div><div class="t" style="left:826.80px;top:309.37px;font-size:10.2px;line-height:10.2px;color:#dddddd;letter-spacing:-0.220px;transform:scaleX(0.9918);transform-origin:0 0;">1.000</div><div class="t" style="left:756.53px;top:329.17px;font-size:10.2px;line-height:10.2px;color:#c4c4c4;letter-spacing:-0.032px;">User Options</div><div class="t" style="left:719.40px;top:349.94px;font-size:10px;line-height:10px;color:#dcdcdc;font-weight:bold;-webkit-text-stroke:0;letter-spacing:-0.220px;transform:scaleX(0.9825);transform-origin:0 0;">Subdivision</div><div class="t" style="left:794.39px;top:369.17px;font-size:10.2px;line-height:10.2px;color:#c4c4c4;letter-spacing:-0.220px;transform:scaleX(0.9946);transform-origin:100% 0;">Type</div><div class="t" style="left:826.60px;top:369.57px;font-size:10.2px;line-height:10.2px;color:#dddddd;letter-spacing:-0.101px;">catclark</div><div class="t" style="left:772.37px;top:387.37px;font-size:10.2px;line-height:10.2px;color:#c4c4c4;letter-spacing:0.133px;">Iterations</div><div class="t" style="left:826.80px;top:388.47px;font-size:10.2px;line-height:10.2px;color:#dddddd;">4</div><div class="t" style="left:745.94px;top:407.17px;font-size:10.2px;line-height:10.2px;color:#c4c4c4;letter-spacing:-0.037px;">Adaptive Metric</div><div class="t" style="left:826.60px;top:408.27px;font-size:10.2px;line-height:10.2px;color:#dddddd;letter-spacing:0.424px;">auto</div><div class="t" style="left:743.71px;top:425.27px;font-size:10.2px;line-height:10.2px;color:#c4c4c4;letter-spacing:-0.108px;">Adaptative Error</div><div class="t" style="left:826.80px;top:426.97px;font-size:10.2px;line-height:10.2px;color:#dddddd;letter-spacing:-0.150px;">0.000</div><div class="t" style="left:739.26px;top:444.17px;font-size:10.2px;line-height:10.2px;color:#c4c4c4;letter-spacing:-0.220px;transform:scaleX(0.9982);transform-origin:100% 0;">Adaptative Space</div><div class="t" style="left:826.60px;top:446.27px;font-size:10.2px;line-height:10.2px;color:#dddddd;letter-spacing:-0.069px;">raster</div><div class="t" style="left:750.88px;top:464.17px;font-size:10.2px;line-height:10.2px;color:#c4c4c4;letter-spacing:-0.081px;">UV Smoothing</div><div class="t" style="left:826.60px;top:464.27px;font-size:10.2px;line-height:10.2px;color:#dddddd;letter-spacing:-0.093px;">pin_corners</div><div class="t" style="left:838.60px;top:480.74px;font-size:10px;line-height:10px;color:#c4c4c4;letter-spacing:0.025px;">Smooth Tangents</div><div class="t" style="left:719.40px;top:500.54px;font-size:10px;line-height:10px;color:#dcdcdc;font-weight:bold;-webkit-text-stroke:0;letter-spacing:-0.220px;transform:scaleX(0.9891);transform-origin:0 0;">Displacement Attributes</div><div class="t" style="left:719.40px;top:519.53px;font-size:10px;line-height:10px;color:#dcdcdc;font-weight:bold;-webkit-text-stroke:0;letter-spacing:-0.151px;">Volume Attributes</div><div class="t" style="left:708.00px;top:543.13px;font-size:10px;line-height:10px;color:#dcdcdc;font-weight:bold;-webkit-text-stroke:0;letter-spacing:-0.198px;">Node Behavior</div><div class="t" style="left:708.00px;top:561.53px;font-size:10px;line-height:10px;color:#dcdcdc;font-weight:bold;-webkit-text-stroke:0;letter-spacing:-0.220px;transform:scaleX(1.0054);transform-origin:0 0;">UUID</div><div class="t" style="left:682.50px;top:581.33px;font-size:10px;line-height:10px;color:#c8c8c8;font-weight:bold;-webkit-text-stroke:0;letter-spacing:-0.220px;transform:scaleX(0.9689);transform-origin:0 0;">Notes:  pSphereShape1</div><div class="t" style="left:721.38px;top:674.83px;font-size:10px;line-height:10px;color:#e0e0e0;font-weight:bold;-webkit-text-stroke:0;letter-spacing:-0.220px;transform:scaleX(0.9485);transform-origin:50% 0;">Select</div><div class="t" style="left:832.59px;top:674.83px;font-size:10px;line-height:10px;color:#e0e0e0;font-weight:bold;-webkit-text-stroke:0;letter-spacing:-0.220px;transform:scaleX(0.9770);transform-origin:50% 0;">Load Attributes</div><div class="t" style="left:978.42px;top:674.83px;font-size:10px;line-height:10px;color:#e0e0e0;font-weight:bold;-webkit-text-stroke:0;letter-spacing:-0.220px;transform:scaleX(0.9543);transform-origin:50% 0;">Copy Tab</div><div class="t" style="left:1071.00px;top:143.80px;font-size:10px;line-height:10px;color:#9c9c9c;letter-spacing:0.238px;transform:rotate(-90deg);transform-origin:0 0;">Modeling Toolkit</div><div class="t" style="left:1071.00px;top:280.20px;font-size:10px;line-height:10px;color:#9c9c9c;letter-spacing:-0.109px;transform:rotate(-90deg);transform-origin:0 0;">Channel Box / Layer Editor</div><div class="t" style="left:1071.00px;top:324.80px;font-size:10px;line-height:10px;color:#9c9c9c;letter-spacing:-0.220px;transform:scaleX(0.9434);transform-origin:50% 0;transform:rotate(-90deg);transform-origin:0 0;">XGen</div><div class="t" style="left:1071.00px;top:479.50px;font-size:10px;line-height:10px;color:#9c9c9c;transform:rotate(-90deg);transform-origin:0 0;">XGen Interactive Groom Editor</div><div class="t" style="left:19.50px;top:64.61px;font-size:10.5px;line-height:10.5px;color:#c8c8c8;letter-spacing:0.041px;">View</div><div class="t" style="left:54.50px;top:64.61px;font-size:10.5px;line-height:10.5px;color:#c8c8c8;letter-spacing:-0.124px;">Shading</div><div class="t" style="left:104.50px;top:64.61px;font-size:10.5px;line-height:10.5px;color:#c8c8c8;letter-spacing:0.103px;">Lighting</div><div class="t" style="left:154.30px;top:64.61px;font-size:10.5px;line-height:10.5px;color:#c8c8c8;letter-spacing:-0.022px;">Show</div><div class="t" style="left:192.40px;top:64.61px;font-size:10.5px;line-height:10.5px;color:#c8c8c8;letter-spacing:-0.220px;transform:scaleX(0.9900);transform-origin:0 0;">Renderer</div><div class="t" style="left:245.60px;top:64.61px;font-size:10.5px;line-height:10.5px;color:#c8c8c8;letter-spacing:-0.220px;transform:scaleX(0.9419);transform-origin:0 0;">Panels</div><div class="t" style="left:575.90px;top:80.51px;font-size:10.5px;line-height:10.5px;color:#d8d8d8;letter-spacing:-0.220px;transform:scaleX(0.9971);transform-origin:0 0;">0.00</div><div class="t" style="left:629.30px;top:80.51px;font-size:10.5px;line-height:10.5px;color:#d8d8d8;letter-spacing:-0.220px;transform:scaleX(0.9562);transform-origin:0 0;">1.00</div><div class="t" style="left:26.20px;top:95.81px;font-size:9.2px;line-height:9.2px;color:#e2e2e2;font-weight:bold;-webkit-text-stroke:0;letter-spacing:-0.155px;">Bifrost Particles:</div><div class="t" style="left:26.20px;top:112.81px;font-size:9.2px;line-height:9.2px;color:#e2e2e2;font-weight:bold;-webkit-text-stroke:0;letter-spacing:-0.147px;">Bifrost Voxels:</div><div class="t" style="left:26.20px;top:129.81px;font-size:9.2px;line-height:9.2px;color:#e2e2e2;font-weight:bold;-webkit-text-stroke:0;letter-spacing:-0.220px;transform:scaleX(0.9970);transform-origin:0 0;">Bifrost Steps:</div><div class="t" style="left:162.00px;top:95.81px;font-size:9.2px;line-height:9.2px;color:#e2e2e2;font-weight:bold;-webkit-text-stroke:0;">0</div><div class="t" style="left:218.30px;top:95.81px;font-size:9.2px;line-height:9.2px;color:#e2e2e2;font-weight:bold;-webkit-text-stroke:0;">0</div><div class="t" style="left:162.00px;top:112.81px;font-size:9.2px;line-height:9.2px;color:#e2e2e2;font-weight:bold;-webkit-text-stroke:0;">0</div><div class="t" style="left:218.30px;top:112.81px;font-size:9.2px;line-height:9.2px;color:#e2e2e2;font-weight:bold;-webkit-text-stroke:0;">0</div><div class="t" style="left:162.00px;top:129.81px;font-size:9.2px;line-height:9.2px;color:#e2e2e2;font-weight:bold;-webkit-text-stroke:0;">0</div><div class="t" style="left:218.30px;top:129.81px;font-size:9.2px;line-height:9.2px;color:#e2e2e2;font-weight:bold;-webkit-text-stroke:0;">0</div><div class="t" style="left:486.90px;top:657.52px;font-size:8.6px;line-height:8.6px;color:#e2e2e2;font-weight:bold;-webkit-text-stroke:0;letter-spacing:0.046px;">Focal Length:</div><div class="t" style="left:585.80px;top:657.52px;font-size:8.6px;line-height:8.6px;color:#e2e2e2;font-weight:bold;-webkit-text-stroke:0;">35</div><div class="t" style="left:486.90px;top:674.72px;font-size:8.6px;line-height:8.6px;color:#e2e2e2;font-weight:bold;-webkit-text-stroke:0;letter-spacing:0.209px;">Frame:</div><div class="t" style="left:586.40px;top:674.72px;font-size:8.6px;line-height:8.6px;color:#e2e2e2;font-weight:bold;-webkit-text-stroke:0;">1</div><div class="t" style="left:318.90px;top:674.32px;font-size:8.6px;line-height:8.6px;color:#e2e2e2;font-weight:bold;-webkit-text-stroke:0;letter-spacing:0.298px;">persp</div>
</body></html>
